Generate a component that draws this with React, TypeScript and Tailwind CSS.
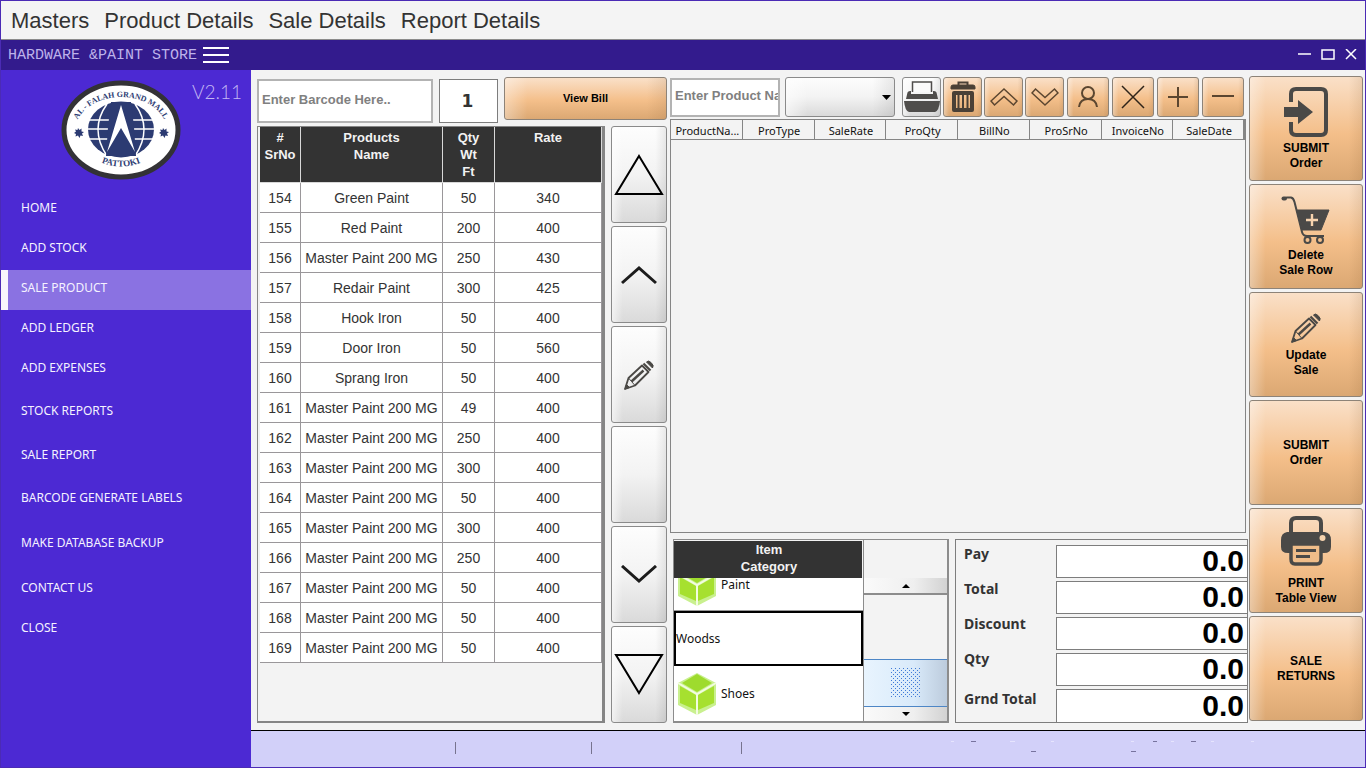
import type { ReactNode } from "react";

const ORANGE =
  "rounded-[3px] border border-[#8d8378] bg-[linear-gradient(to_right,rgba(255,255,255,0.35),rgba(255,255,255,0)_14%,rgba(255,255,255,0)_88%,rgba(120,80,40,0.12)),linear-gradient(to_bottom,#fae0c8,#f4bf8a_55%,#dba873)]";
const SILVER =
  "rounded-[3px] border border-[#8a8a8a] bg-[linear-gradient(to_right,rgba(255,255,255,0.6),rgba(255,255,255,0)_20%,rgba(0,0,0,0)_80%,rgba(0,0,0,0.08)),linear-gradient(to_bottom,#fdfdfd,#f3f3f3_50%,#dadada)]";

const menus = ["Masters", "Product Details", "Sale Details", "Report Details"];

const navItems = [
  { label: "HOME", space: "" },
  { label: "ADD STOCK", space: "" },
  { label: "SALE PRODUCT", space: "", active: true },
  { label: "ADD LEDGER", space: "" },
  { label: "ADD EXPENSES", space: "" },
  { label: "STOCK REPORTS", space: "mt-[3px]" },
  { label: "SALE REPORT", space: "mt-1" },
  { label: "BARCODE GENERATE LABELS", space: "mt-[3px]" },
  { label: "MAKE DATABASE BACKUP", space: "mt-[5px]" },
  { label: "CONTACT US", space: "mt-[5px]" },
  { label: "CLOSE", space: "" },
];

const products: [number, string, number, number][] = [
  [154, "Green Paint", 50, 340],
  [155, "Red Paint", 200, 400],
  [156, "Master Paint 200 MG", 250, 430],
  [157, "Redair Paint", 300, 425],
  [158, "Hook Iron", 50, 400],
  [159, "Door Iron", 50, 560],
  [160, "Sprang Iron", 50, 400],
  [161, "Master Paint 200 MG", 49, 400],
  [162, "Master Paint 200 MG", 250, 400],
  [163, "Master Paint 200 MG", 300, 400],
  [164, "Master Paint 200 MG", 50, 400],
  [165, "Master Paint 200 MG", 300, 400],
  [166, "Master Paint 200 MG", 250, 400],
  [167, "Master Paint 200 MG", 50, 400],
  [168, "Master Paint 200 MG", 50, 400],
  [169, "Master Paint 200 MG", 50, 400],
];

const saleColumns = ["ProductNa...", "ProType", "SaleRate", "ProQty", "BillNo", "ProSrNo", "InvoiceNo", "SaleDate"];

const totals = [
  { id: "pay", label: "Pay" },
  { id: "total", label: "Total" },
  { id: "discount", label: "Discount" },
  { id: "qty", label: "Qty" },
  { id: "grand-total", label: "Grnd Total" },
];

function Logo() {
  return (
    <svg width="120" height="102" viewBox="0 0 120 102" role="img" aria-label="Al-Falah Grand Mall Pattoki">
      <defs>
        <path id="logo-top" d="M14 52 A46 34 0 0 1 106 52" />
        <path id="logo-bottom" d="M26 76 Q60 99 94 76" />
      </defs>
      <ellipse cx="60" cy="51" rx="57" ry="47" fill="#fff" stroke="#333236" strokeWidth="5" />
      <ellipse cx="60" cy="50.500" rx="33" ry="28" fill="#2c3b72" />
      <g fill="none" stroke="#fff" strokeWidth="1.500">
        <path d="M27 41H93M25 50H95M27 60H93" />
        <path d="M46 25Q28 50 46 77M74 25Q92 50 74 77" />
      </g>
      <path d="M50 23H70L73 48L75 77H45L47 48Z" fill="#2c3b72" />
      <path d="M60 26L74 73L60 49L46 73Z" fill="#fff" />
      <g fill="#2c3b72">
        <path d="M17 49l1.500 2 2-1.500v3l2.500.5-2 1.500 1 2.500-2.500-.5-1 2.500-1.500-2.500-2.500 1 .5-2.500-2-1 2-1.500-1-2 2.500.5z" />
        <path d="M102 49l1.500 2 2-1.500v3l2.500.5-2 1.500 1 2.500-2.500-.5-1 2.500-1.500-2.500-2.500 1 .5-2.500-2-1 2-1.500-1-2 2.500.5z" />
      </g>
      <g fill="#2c3b72" className="font-['Liberation_Serif',serif] text-[8px] font-bold" textAnchor="middle">
        <text><textPath href="#logo-top" startOffset="50%">AL - FALAH GRAND MALL</textPath></text>
        <text className="text-[9px]"><textPath href="#logo-bottom" startOffset="50%">PATTOKI</textPath></text>
      </g>
    </svg>
  );
}

function Pencil() {
  return (
    <svg width="32" height="32" viewBox="0 0 32 32" fill="none" stroke="#4a4845">
      <path d="M2 30L5.500 19L19 6.500L25.500 13L12 26.500Z" strokeWidth="1.800" strokeLinejoin="round" />
      <path d="M8.500 22.500L20.500 11.500" strokeWidth="2.400" />
      <path d="M5.500 19L8.500 22.500L12 26.500" strokeWidth="1" />
      <path d="M2 30L3.500 25.500L6.500 28.500Z" fill="#4a4845" strokeWidth="1" />
      <path d="M20.500 4.500L27.500 11.500" strokeWidth="2.200" />
      <path d="M23.500 3Q25 .8 28 3.500Q31.500 6.500 29.500 9Z" fill="#4a4845" strokeWidth="1" />
    </svg>
  );
}

function SubmitIcon() {
  return (
    <svg width="46" height="50" viewBox="0 0 46 50">
      <path d="M8 15V7Q8 2 13 2H38Q43 2 43 7V43Q43 48 38 48H13Q8 48 8 43V35" fill="none" stroke="#4a4947" strokeWidth="4" />
      <path d="M1 20H15V13L30 25L15 37V30H1Z" fill="#4a4947" />
    </svg>
  );
}

function CartIcon() {
  return (
    <svg width="50" height="48" viewBox="0 0 50 48" fill="none" stroke="#4a4947">
      <path d="M2 2.500L6 1.500H10Q12.500 2 13.500 6L21 36Q22 40 26 40H43" strokeWidth="2" />
      <path d="M2.500 2.500H4" strokeWidth="4" strokeLinecap="round" />
      <path d="M16 14H48L40 34H21Z" fill="#4a4947" strokeWidth="1" />
      <path d="M31 18V30M25 24H37" stroke="#f6d3ae" strokeWidth="2.400" />
      <circle cx="26.500" cy="44" r="3" strokeWidth="2" />
      <circle cx="39" cy="44" r="3" strokeWidth="2" />
    </svg>
  );
}

function PrinterIcon() {
  return (
    <svg width="50" height="50" viewBox="0 0 50 50">
      <path d="M10 18V7Q10 2 15 2H35Q40 2 40 7V18" fill="none" stroke="#4a4947" strokeWidth="4" />
      <path d="M6 16H44Q50 17 50 24V31Q50 37 43 37H7Q0 37 0 31V24Q0 17 6 16Z" fill="#4a4947" />
      <path d="M10 28H40V43Q40 48 36 48H14Q10 48 10 43Z" fill="#f0bd89" stroke="#4a4947" strokeWidth="3.500" />
      <path d="M15 34.500H35M15 40.500H29" stroke="#4a4947" strokeWidth="3" />
      <circle cx="41.500" cy="22" r="3" fill="#f6d3ae" />
    </svg>
  );
}

function TrayPrinter() {
  return (
    <svg width="36" height="34" viewBox="0 0 36 34">
      <path d="M8.500 12V2H27.500V12" fill="#fafafa" stroke="#4f4d4b" strokeWidth="1.500" />
      <path d="M2 19L3.500 12.500Q4 11 6 11H7V14H29V11H30Q32 11 32.500 12.500L34 19Z" fill="#4f4d4b" />
      <path d="M0 21H36Q35 31 31 32H5Q1 31 0 21Z" fill="#4f4d4b" />
    </svg>
  );
}

function TrashIcon() {
  return (
    <svg width="26" height="32" viewBox="0 0 26 32" fill="none" stroke="#4a4036">
      <path d="M8.500 4V1.500H17.500V4" strokeWidth="2" />
      <path d="M1 8V6Q1 4 3 4H23Q25 4 25 6V8Z" fill="#4a4036" strokeWidth="1" />
      <path d="M4 12H22V29H4Z" strokeWidth="4" strokeLinejoin="round" />
      <path d="M8.500 12V28M13 12V28M17.500 12V28" strokeWidth="2" />
    </svg>
  );
}

const thin = { fill: "none", stroke: "#5b4630", strokeWidth: 1.5 };

const toolbar: { name: string; style: string; icon: ReactNode }[] = [
  { name: "Print", style: `w-[39px] ${SILVER}`, icon: <TrayPrinter /> },
  { name: "Delete", style: `w-[39px] ${ORANGE}`, icon: <TrashIcon /> },
  { name: "Move up", style: `w-[39px] ${ORANGE}`, icon: <svg width="28" height="20" viewBox="0 0 28 20" {...thin}><path d="M14 2L27 14L23.500 18L14 9.500L4.500 18L1 14Z" /></svg> },
  { name: "Move down", style: `mr-px w-[39px] ${ORANGE}`, icon: <svg width="28" height="20" viewBox="0 0 28 20" {...thin}><path d="M14 18L27 6L23.500 2L14 10.500L4.500 2L1 6Z" /></svg> },
  { name: "Customer", style: `mr-px w-[42px] ${ORANGE}`, icon: <svg width="20" height="24" viewBox="0 0 20 24" {...thin} strokeWidth={2}><circle cx="10" cy="8" r="6" /><path d="M1 22Q2 14 10 14Q18 14 19 22" /></svg> },
  { name: "Cancel", style: `mr-px w-[42px] ${ORANGE}`, icon: <svg width="24" height="24" viewBox="0 0 24 24" {...thin} stroke="#2f2419"><path d="M1 1L23 23M23 1L1 23" /></svg> },
  { name: "Add", style: `mr-px w-[42px] ${ORANGE}`, icon: <svg width="20" height="20" viewBox="0 0 20 20" {...thin} strokeWidth={2}><path d="M10 0V20M0 10H20" /></svg> },
  { name: "Remove", style: `w-[42px] ${ORANGE}`, icon: <svg width="22" height="20" viewBox="0 0 22 20" {...thin} strokeWidth={2}><path d="M0 9H22" /></svg> },
];

const steps: { name: string; icon: ReactNode }[] = [
  { name: "First row", icon: <svg width="50" height="44" viewBox="0 0 50 44" fill="none" stroke="#000" strokeWidth="2"><path d="M25 3L48 41H2Z" /></svg> },
  { name: "Previous row", icon: <svg width="36" height="20" viewBox="0 0 36 20" fill="none" stroke="#1c1c1c" strokeWidth="3"><path d="M1 18L18 3L35 18" /></svg> },
  { name: "Edit row", icon: <Pencil /> },
  { name: "Blank", icon: null },
  { name: "Next row", icon: <svg width="36" height="20" viewBox="0 0 36 20" fill="none" stroke="#1c1c1c" strokeWidth="3"><path d="M1 1L18 16L35 1" /></svg> },
  { name: "Last row", icon: <svg width="50" height="44" viewBox="0 0 50 44" fill="none" stroke="#000" strokeWidth="2"><path d="M25 40L48 2H2Z" /></svg> },
];

const actions: { lines: [string, string]; icon?: ReactNode; gap: string }[] = [
  { lines: ["SUBMIT", "Order"], icon: <SubmitIcon />, gap: "gap-1" },
  { lines: ["Delete", "Sale Row"], icon: <CartIcon />, gap: "gap-1" },
  { lines: ["Update", "Sale"], icon: <Pencil />, gap: "gap-1" },
  { lines: ["SUBMIT", "Order"], gap: "gap-1" },
  { lines: ["PRINT", "Table View"], icon: <PrinterIcon />, gap: "gap-[10px]" },
  { lines: ["SALE", "RETURNS"], gap: "gap-1" },
];

function Cube() {
  return (
    <svg width="40" height="44" viewBox="0 0 40 44" aria-hidden="true">
      <path d="M20 1L39 11V33L20 43L1 33V11Z" fill="#c9f08f" />
      <path d="M20 2L35 11L20 20L5 11Z" fill="#9edb2e" />
      <path d="M3 14L19 23V38L3 31Z" fill="#a6e02f" />
      <path d="M37 14L21 23V38L37 31Z" fill="#a6e02f" />
      <path d="M1 11L20 22L39 11M20 22V43" stroke="#f2fce0" strokeWidth="2" fill="none" />
    </svg>
  );
}

function Header() {
  return (
    <header>
      <nav className="flex h-[39px] items-center gap-[15px] border-b border-[#8c8c8c] bg-[#f4f4f4] pl-[10px] text-[22px] text-[#333]" aria-label="Main menu">
        {menus.map((m) => (
          <button key={m} type="button" className="whitespace-nowrap">{m}</button>
        ))}
      </nav>
      <div className="flex h-[30px] items-center bg-[#331b8d] pl-[7px]">
        <h1 className="pt-[2px] font-['Liberation_Mono',monospace] text-[15px] whitespace-pre text-[#bdb2ea]">HARDWARE &amp;PAINT STORE</h1>
        <button type="button" aria-label="Toggle menu" className="ml-[6px]">
          <svg width="26" height="18" viewBox="0 0 26 18" stroke="#fff" strokeWidth="2"><path d="M0 2H26M0 9H26M0 16H26" /></svg>
        </button>
        <div className="ml-auto flex gap-[10px] pr-2">
          <button type="button" aria-label="Minimize"><svg width="13" height="12" viewBox="0 0 13 12" stroke="#fff" strokeWidth="1.500"><path d="M0 5H13" /></svg></button>
          <button type="button" aria-label="Maximize"><svg width="14" height="12" viewBox="0 0 14 12" fill="none" stroke="#fff" strokeWidth="1.500"><path d="M1 1H13V10H1Z" /></svg></button>
          <button type="button" aria-label="Close window"><svg width="12" height="12" viewBox="0 0 12 12" stroke="#fff" strokeWidth="1.500"><path d="M1 0L11 10M11 0L1 10" /></svg></button>
        </div>
      </div>
    </header>
  );
}

function Sidebar() {
  return (
    <aside className="w-[250px] shrink-0 bg-[#4c29d3]">
      <div className="flex h-[120px] items-start pt-[9px] pl-[60px]">
        <Logo />
        <span className="ml-[11px] font-['Lato',sans-serif] text-[19px] leading-[26px] font-light text-[#c3b7f3]">V2.11</span>
      </div>
      <nav aria-label="Sections" className="flex flex-col font-['Noto_Sans',sans-serif] text-[12px] text-[#f5f2ff]">
        {navItems.map((n) => (
          <a
            key={n.label}
            href="#"
            className={`flex h-10 items-center pb-1 ${n.space} ${n.active ? "border-l-[7px] border-[#f8f6fc] bg-[#8a72e2] pl-[13px]" : "pl-5"}`}
          >
            {n.label}
          </a>
        ))}
      </nav>
    </aside>
  );
}

function ProductPane() {
  const th = "border-r border-b border-[#d8d8d8] bg-[#333] px-0 pt-[2px] pb-0 align-top font-bold";
  const td = "border-r border-b border-[#9a979a] p-0";
  return (
    <section className="flex w-[410px] shrink-0 flex-col">
      <div className="flex h-[50px] items-center gap-[6px]">
        <input aria-label="Barcode" placeholder="Enter Barcode Here.." className="h-[44px] w-[176px] border-2 border-[#b3b3b3] bg-white px-[3px] pb-1 text-[13px] font-bold placeholder:text-[#808080]" />
        <input aria-label="Quantity" defaultValue="1" className="h-[44px] w-[59px] border border-[#7d7d7d] bg-white pr-[2px] text-center font-['DejaVu_Sans',sans-serif] text-[17px] font-bold text-[#333]" />
        <button type="button" className={`mt-px h-[43px] flex-1 self-start text-[11px] font-bold ${ORANGE}`}>View Bill</button>
      </div>
      <div className="flex grow gap-[6px]">
        <div className="flex-1 border border-r-[3px] border-b-2 border-[#858585] pl-[2px]">
          <table className="w-full table-fixed border-separate border-spacing-0 text-center text-[#333]">
            <colgroup>
              <col className="w-[41px]" /><col className="w-[142px]" /><col className="w-[52px]" /><col />
            </colgroup>
            <thead>
              <tr className="h-[56px] text-[13px] leading-[17px] text-[#f2f2f2]">
                <th className={th}>#<br />SrNo</th>
                <th className={th}>Products<br />Name</th>
                <th className={th}>Qty<br />Wt<br />Ft</th>
                <th className={th}>Rate</th>
              </tr>
            </thead>
            <tbody className="bg-white text-[14px] leading-5">
              {products.map(([no, name, qty, rate]) => (
                <tr key={no} className="h-[30px]">
                  <td className={td}>{no}</td>
                  <td className={`${td} whitespace-nowrap`}>{name}</td>
                  <td className={td}>{qty}</td>
                  <td className={td}>{rate}</td>
                </tr>
              ))}
            </tbody>
          </table>
        </div>
        <div className="flex w-[56px] flex-col gap-[3px]">
          {steps.map((s) => (
            <button key={s.name} type="button" aria-label={s.name} className={`flex flex-1 items-center justify-center ${SILVER}`}>{s.icon}</button>
          ))}
        </div>
      </div>
    </section>
  );
}

function CategoryPanel() {
  return (
    <div className="flex w-[276px] shrink-0 border border-r-2 border-b-2 border-[#8c8c8c]">
      <div className="flex w-[189px] flex-col font-['Noto_Sans',sans-serif] text-[12px] leading-3 text-[#111]">
        <div className="mt-px mr-px flex h-[37px] flex-col items-center bg-[#333] pl-[2px] font-['Liberation_Sans',sans-serif] text-[13px] leading-[17px] font-bold text-[#f2f2f2]">
          <span>Item</span>
          <span>Category</span>
        </div>
        <ul className="flex h-[143px] flex-col justify-end overflow-hidden bg-white">
          <li className="flex h-[55px] shrink-0 items-center gap-1 border-b border-[#999] pt-1 pl-[3px]"><Cube />Paint</li>
          <li className="flex h-[55px] shrink-0 items-center border-2 border-black">Woodss</li>
          <li className="flex h-[55px] shrink-0 items-center gap-1 pl-[3px]"><Cube />Shoes</li>
        </ul>
      </div>
      <div className="flex flex-1 flex-col border-l border-[#8c8c8c] pt-[38px]">
        <button type="button" aria-label="Scroll up" className="flex h-[17px] items-center justify-center border-b-2 border-[#8c8c8c] bg-[linear-gradient(to_right,#fafafa,#efefef_60%,#d2d2d2)]">
          <svg width="10" height="6" viewBox="0 0 10 6"><path d="M5 1L9 5H1Z" /></svg>
        </button>
        <div className="flex-1" />
        <div className="flex h-[48px] items-center justify-center border-y border-[#4d86c6] bg-[linear-gradient(to_right,#e8f4fe,#d9eafa_60%,#bccbdc)]">
          <svg width="30" height="30" aria-hidden="true">
            <defs>
              <pattern id="grip" width="4" height="4" patternUnits="userSpaceOnUse">
                <path d="M0 0H1V1H0ZM2 2H3V3H2Z" fill="#3f7ad8" />
              </pattern>
            </defs>
            <rect width="30" height="30" fill="url(#grip)" />
          </svg>
        </div>
        <button type="button" aria-label="Scroll down" className="flex h-[14px] items-center justify-center bg-[linear-gradient(to_right,#fafafa,#efefef_60%,#d2d2d2)]">
          <svg width="10" height="6" viewBox="0 0 10 6"><path d="M5 5L9 1H1Z" /></svg>
        </button>
      </div>
    </div>
  );
}

function TotalsPanel() {
  return (
    <div className="flex flex-1 border border-[#7d7d7d]">
      <div className="flex w-[100px] shrink-0 flex-col pl-2 font-['Noto_Sans',sans-serif] text-[14px] leading-[28px] font-bold text-[#333]">
        {totals.map((t) => (
          <label key={t.id} htmlFor={t.id} className="h-[35px] last:mt-[5px]">{t.label}</label>
        ))}
      </div>
      <div className="flex min-w-0 flex-1 flex-col justify-between pt-[5px]">
        {totals.map((t) => (
          <input key={t.id} id={t.id} defaultValue="0.0" className="h-[33px] w-full border border-r-0 border-[#7d7d7d] bg-white pr-[3px] pb-px text-right text-[30px] leading-[30px] font-bold text-black last:border-b-0" />
        ))}
      </div>
    </div>
  );
}

function SalesPane() {
  return (
    <section className="flex min-w-0 flex-1 flex-col">
      <div className="flex h-[43px] gap-[2px] pt-px">
        <input aria-label="Product name" placeholder="Enter Product Name" className="mt-px mr-[3px] h-[39px] w-[110px] border-2 border-[#b3b3b3] bg-white pb-1 pl-[3px] text-[13px] font-bold placeholder:text-[#808080]" />
        <div className="relative mr-[5px] h-10 w-[110px]">
          <select aria-label="Product type" className={`h-full w-full appearance-none ${SILVER}`}>
            <option></option>
          </select>
          <svg className="pointer-events-none absolute top-[18px] right-1" width="9" height="5" viewBox="0 0 9 5"><path d="M0 0H9L4.500 5Z" /></svg>
        </div>
        {toolbar.map((b) => (
          <button key={b.name} type="button" aria-label={b.name} className={`flex h-10 shrink-0 items-center justify-center ${b.style}`}>{b.icon}</button>
        ))}
      </div>
      <div className="mr-[2px] flex-1 border border-[#858585]">
        <table className="w-full table-fixed border-separate border-spacing-0 font-['Noto_Sans',sans-serif] text-[11px] text-[#111]">
          <thead>
            <tr className="h-5">
              {saleColumns.map((c) => (
                <th key={c} className="border-r border-b border-[#858585] pt-[2px] pr-0 pb-0 pl-[2px] leading-4 font-normal whitespace-nowrap last:border-r-2">{c}</th>
              ))}
            </tr>
          </thead>
        </table>
      </div>
      <div className="mt-[6px] flex h-[184px] gap-[6px] pl-[3px]">
        <CategoryPanel />
        <TotalsPanel />
      </div>
    </section>
  );
}

function StatusBar() {
  return (
    <footer className="flex h-[37px] items-center border-t border-black bg-[#d2d0f9] pb-[2px]">
      <span className="ml-[204px] h-3 w-px bg-[#77738f]" />
      <span className="ml-[135px] h-3 w-px bg-[#77738f]" />
      <span className="ml-[149px] h-3 w-px bg-[#77738f]" />
      <svg className="ml-auto" width="420" height="16" viewBox="0 0 420 16" fill="none" aria-hidden="true">
        <path d="M26 1.500H31M208 1.500H212M246 1.500H251M86 11.500H91M186 11.500H191" stroke="#77739e" />
        <path d="M6 1.500H9M65 1.500H70M106 1.500H109M186 1.500H189M226 1.500H229M266 1.500H269M306 1.500H309" stroke="#e6e4fe" />
      </svg>
    </footer>
  );
}

export default function App() {
  return (
    <div className="flex min-h-screen flex-col border border-[#4b2bb5] bg-[#f3f3f3] font-['Liberation_Sans',Arial,sans-serif]">
      <Header />
      <div className="flex grow">
        <Sidebar />
        <div className="flex min-w-0 flex-1 flex-col">
          <main className="flex grow pt-[6px] pr-[2px] pb-[7px] pl-[6px]">
            <ProductPane />
            <div className="ml-[3px] flex min-w-0 flex-1 gap-px">
              <SalesPane />
              <div className="flex w-[114px] shrink-0 flex-col gap-[3px]">
                {actions.map((a, i) => (
                  <button key={i} type="button" className={`flex h-[105px] flex-col items-center justify-center text-[12px] leading-[15px] font-bold text-black ${a.gap} ${ORANGE}`}>
                    {a.icon}
                    <span>{a.lines[0]}<br />{a.lines[1]}</span>
                  </button>
                ))}
              </div>
            </div>
          </main>
          <StatusBar />
        </div>
      </div>
    </div>
  );
}
